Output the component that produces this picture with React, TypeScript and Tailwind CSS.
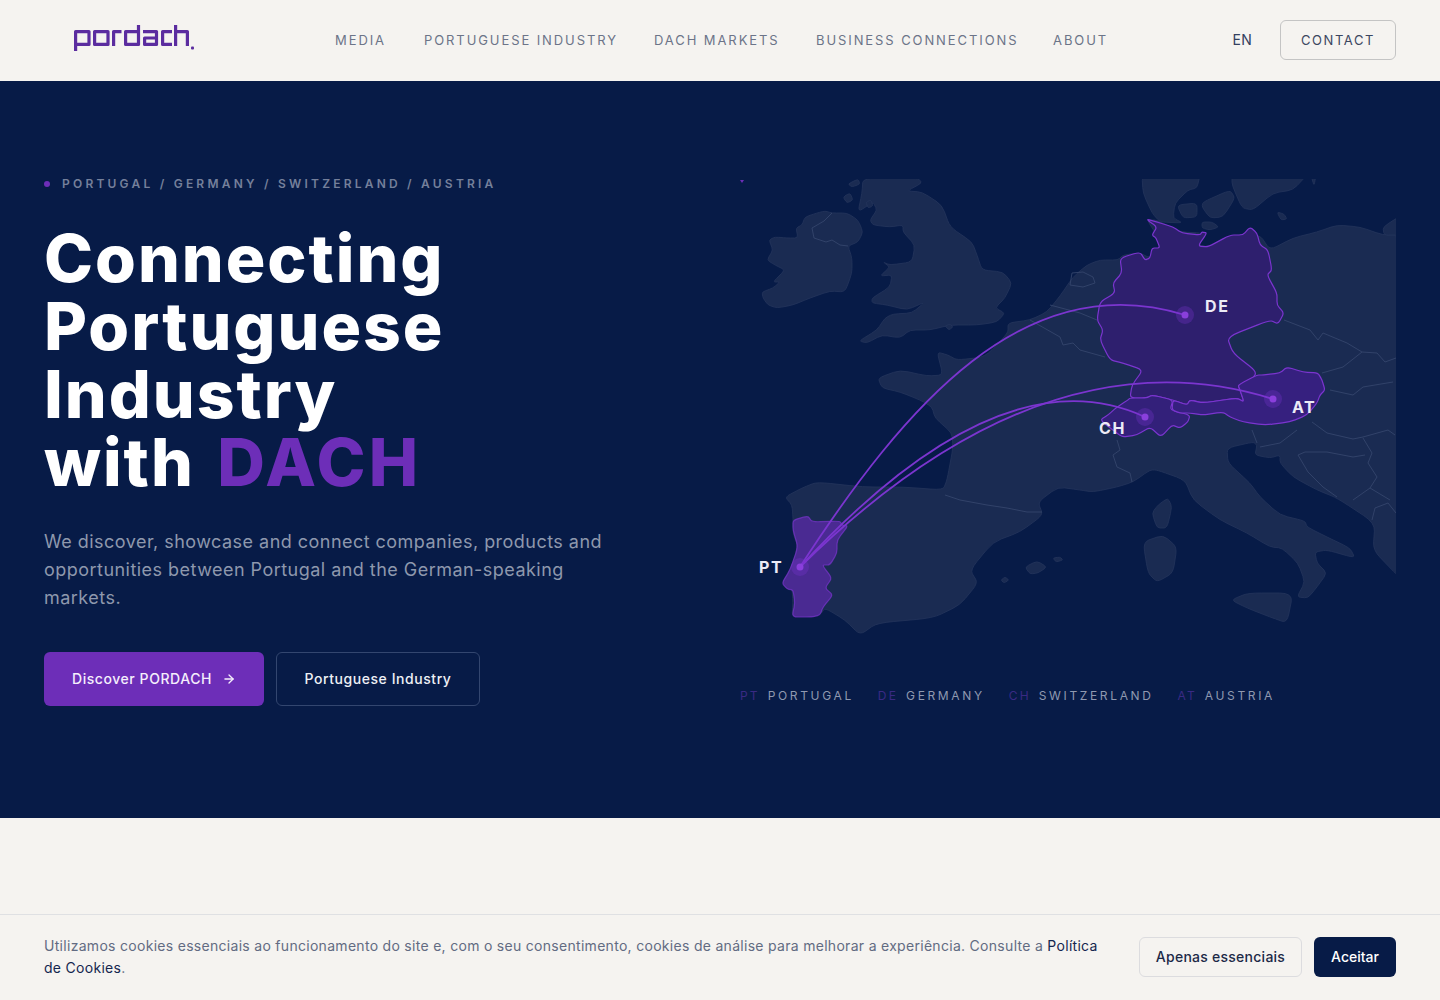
import { ArrowRight } from 'lucide-react';

const NAV_LINKS = [
  { label: 'MEDIA', cls: 'w-[53px]' },
  { label: 'PORTUGUESE INDUSTRY', cls: 'w-[194px]' },
  { label: 'DACH MARKETS', cls: 'w-[126px]' },
  { label: 'BUSINESS CONNECTIONS', cls: 'w-[201px]' },
  { label: 'ABOUT', cls: 'w-[55px]' },
];

const LEGEND = [
  { code: 'PT', name: 'PORTUGAL' },
  { code: 'DE', name: 'GERMANY' },
  { code: 'CH', name: 'SWITZERLAND' },
  { code: 'AT', name: 'AUSTRIA' },
];

// map shapes, traced in page coordinates (the viewBox below starts at the map's corner)
const LAND = [
  // Ireland
  '769,240 775,237 787,238 798,238 796,228 802,225 805,217 817,213 825,211 832,213 847,213 858,220 863,232 858,242 848,246 852,258 852,273 845,292 830,291 810,298 793,305 777,308 768,305 763,298 762,292 773,288 780,282 773,282 785,270 775,265 767,260 773,250',
  // Great Britain
  '863,178 918,178 922,183 907,191 922,192 942,205 950,227 972,242 977,255 982,270 1003,272 1012,283 1005,298 995,308 1005,313 997,322 977,325 950,325 930,330 910,330 900,338 882,335 867,343 859,341 877,330 885,318 893,314 912,313 925,302 907,310 887,305 872,303 872,298 890,287 892,275 880,276 890,267 883,262 890,265 912,262 915,245 903,232 903,225 890,227 873,225 870,220 877,210 873,202 858,212 862,193',
  '848,184 858,179 860,184 852,187',
  '843,197 850,193 853,200 847,203',
  '866,202 871,200 873,206 868,208',
  '945,326 950,324 953,327 949,330',
  // Mainland
  '1400,235 1383,235 1360,227 1337,225 1317,232 1293,238 1270,250 1260,235 1233,235 1210,247 1198,245 1203,233 1180,232 1157,220 1147,220 1158,237 1160,248 1150,258 1140,253 1123,255 1118,260 1100,260 1087,265 1073,277 1060,296 1047,312 1030,320 1008,323 1008,333 985,357 957,360 948,355 937,352 943,375 927,376 900,370 878,378 882,388 900,392 920,400 932,407 935,418 952,433 953,448 947,480 943,490 903,487 863,487 817,482 802,488 785,497 792,505 793,518 793,533 798,547 790,570 782,583 792,588 793,603 792,617 820,615 825,608 845,620 860,635 877,623 933,618 960,605 978,583 970,570 993,542 1020,532 1043,515 1038,502 1058,487 1080,490 1093,492 1117,487 1133,482 1150,470 1157,470 1185,480 1193,500 1220,520 1247,533 1270,547 1282,548 1298,563 1305,582 1297,597 1308,598 1317,587 1327,573 1317,563 1315,552 1327,550 1355,558 1350,548 1327,537 1307,527 1305,521 1280,515 1260,497 1250,483 1228,463 1227,448 1253,442 1257,445 1255,455 1270,458 1280,455 1280,463 1293,477 1317,490 1337,498 1375,523 1373,550 1395,573 1400,577',
  // Denmark
  '1142,175 1200,175 1197,188 1188,190 1175,203 1173,218 1183,223 1160,222 1152,213 1143,193',
  '1203,202 1230,190 1235,198 1223,217 1210,218 1202,207',
  '1177,205 1197,203 1197,217 1183,218',
  '1202,222 1212,222 1219,227 1210,230 1202,228',
  '1277,212 1284,214 1287,219 1281,220',
  // Sweden and the Baltic edge
  '1232,175 1307,175 1293,190 1273,193 1253,210 1242,208 1232,185',
  '1311,175 1316,175 1314,186',
  '1383,227 1400,216 1400,235 1384,235',
  // Corsica, Sardinia, Sicily
  '1168,498 1172,507 1167,528 1157,528 1152,513 1158,505',
  '1143,542 1163,535 1177,547 1173,573 1157,582 1148,573',
  '1231,600 1248,593 1293,593 1287,623 1270,617 1247,608',
  // Balearics
  '1025,567 1037,561 1047,567 1038,573 1030,574',
  '1053,558 1060,557 1063,560 1056,562',
  '1001,580 1005,577 1009,580 1004,583',
];

const BORDERS = [
  'M832,213 L824,221 L812,228 L814,238 L826,242 L832,240 L840,245 L848,246',
  'M945,495 L960,500 L987,505 L1007,508 L1027,512 L1042,512',
  'M1030,320 L1060,337 L1063,345 L1073,343 L1080,350 L1105,357',
  'M1050,305 L1080,313 L1097,320',
  'M1117,440 L1120,450 L1113,455 L1117,467 L1130,473 L1132,482',
  'M1252,430 L1257,443 M1297,430 L1280,443 L1260,447',
  'M1312,422 L1327,433 L1353,439 L1363,437 L1388,430 L1395,435',
  'M1298,455 L1305,452 L1327,452 L1353,457 L1365,455 M1298,455 L1308,472 L1323,487 L1337,497',
  'M1363,438 L1372,453 L1368,463 L1377,477 L1370,488 L1353,500 M1370,488 L1390,500',
  'M1372,520 L1375,508 L1388,503 L1396,513',
  'M1284,320 L1310,330 L1318,340 L1323,333 L1347,343 L1362,352 L1377,353 L1385,362 L1396,358',
  'M1322,373 L1343,367 L1362,352',
  'M1330,390 L1353,395 L1363,387 L1393,382',
  'M1083,272 L1093,277 L1095,283 L1083,287 L1070,285 L1072,273 Z',
];

const GERMANY =
  '1146,219 1157,222 1173,227 1182,233 1200,235 1202,232 1207,233 1198,246 1208,247 1230,235 1243,235 1250,227 1257,233 1260,245 1268,250 1272,270 1267,275 1277,293 1277,305 1284,313 1278,324 1270,320 1227,337 1233,353 1257,372 1250,382 1238,385 1240,390 1244,402 1237,398 1203,403 1190,400 1187,405 1173,400 1152,395 1147,398 1130,398 1132,385 1143,370 1123,363 1110,360 1100,340 1103,330 1097,320 1100,302 1115,293 1113,283 1122,273 1120,258 1140,252 1145,260 1150,258 1152,248 1160,248 1156,238 1152,235 1157,227';
const SWITZERLAND =
  '1130,398 1147,398 1152,395 1173,400 1170,410 1190,415 1188,422 1180,428 1172,425 1161,437 1150,427 1137,435 1123,437 1118,434 1100,420 1108,415 1117,407 1128,400';
const AUSTRIA =
  '1240,390 1238,385 1257,375 1263,375 1280,373 1287,367 1303,372 1318,373 1322,380 1325,390 1320,395 1317,403 1307,415 1290,422 1265,425 1243,422 1230,417 1223,412 1203,415 1190,413 1180,413 1172,410 1173,400 1187,405 1190,400 1203,403 1237,398 1244,402';
const PORTUGAL =
  '793,520 808,516 812,522 840,521 842,525 848,526 837,540 837,553 830,565 822,565 832,578 825,588 833,595 823,607 820,615 812,617 792,617 795,603 793,590 787,589 782,583 790,570 798,547 793,530';

const ROUTES = ['M800,567 C905,405 1025,265 1185,315', 'M800,567 Q1044,327 1273,399', 'M800,567 Q1000,350 1145,417'];
const PINS = [
  [1185, 315],
  [1273, 399],
  [1145, 417],
  [800, 567],
];
const PIN_LABELS = [
  { text: 'DE', x: 1205, y: 312 },
  { text: 'AT', x: 1292, y: 413 },
  { text: 'CH', x: 1099, y: 434 },
  { text: 'PT', x: 759, y: 573 },
];

// round off the corners of a traced outline so coasts don't look like polygons
function soften(points: string) {
  const pts = points.split(' ').map((p) => p.split(',').map(Number));
  const n = pts.length;
  const r = 0.3;
  let d = '';
  pts.forEach((p, i) => {
    const prev = pts[(i - 1 + n) % n];
    const next = pts[(i + 1) % n];
    const ax = p[0] + (prev[0] - p[0]) * r;
    const ay = p[1] + (prev[1] - p[1]) * r;
    const bx = p[0] + (next[0] - p[0]) * r;
    const by = p[1] + (next[1] - p[1]) * r;
    d += `${i === 0 ? 'M' : 'L'}${ax.toFixed(1)},${ay.toFixed(1)} Q${p[0]},${p[1]} ${bx.toFixed(1)},${by.toFixed(1)} `;
  });
  return d + 'Z';
}

function Logo() {
  return (
    <svg role="img" aria-label="pordach" width="125" height="30" viewBox="74 24 125 30" className="block">
      <g fill="none" stroke="#5b2c9f" strokeWidth="3.2" strokeLinejoin="round">
        <path d="M75.6,51 V31.6 H89 V44.4 H75.6" />
        <path d="M94.6,31.6 H108 V44.4 H94.6 Z" />
        <path d="M113.6,46 V31.6 H121.5" />
        <path d="M138.5,25 V44.4 H125.6 V31.6 H138.5" />
        <path d="M143,31.6 H156.5 V44.4 H144.6 V38 H156.5" />
        <path d="M172,31.6 H162.6 V44.4 H172" />
        <path d="M175.6,25 V46 M175.6,31.6 H187.4 V46" />
      </g>
      <rect x="191" y="46.5" width="3" height="3" rx="1" fill="#5b2c9f" />
    </svg>
  );
}

function EuropeMap() {
  return (
    <svg viewBox="740 179 656 470" width="656" height="470" className="block">
      <g fill="#1a2b52" stroke="#24355c" strokeWidth="0.8" strokeLinejoin="round">
        {LAND.map((pts, i) => (
          <path key={i} d={soften(pts)} />
        ))}
      </g>
      <g fill="none" stroke="#34456c" strokeWidth="0.9" strokeLinejoin="round">
        {BORDERS.map((d, i) => (
          <path key={i} d={d} />
        ))}
      </g>
      <polygon points="740,180 744,180 742,183" fill="#6d2eb8" />
      <g stroke="#7b35cf" strokeWidth="1.2" strokeLinejoin="round">
        <path d={soften(GERMANY)} fill="#2e1f6e" />
        <path d={soften(SWITZERLAND)} fill="#33207a" />
        <path d={soften(AUSTRIA)} fill="#36207f" />
        <path d={soften(PORTUGAL)} fill="#4a2a92" strokeOpacity="0.7" />
      </g>
      <g fill="none" stroke="#7b35cf" strokeWidth="1.8">
        {ROUTES.map((d) => (
          <path key={d} d={d} />
        ))}
      </g>
      {PINS.map(([x, y]) => (
        <g key={x}>
          <circle cx={x} cy={y} r="9" fill="#7b35cf" fillOpacity="0.3" />
          <circle cx={x} cy={y} r="3.5" fill="#8a3fdc" />
        </g>
      ))}
      {PIN_LABELS.map((l) => (
        <text
          key={l.text}
          x={l.x}
          y={l.y}
          fill="#ecebf6"
          fontSize="16"
          fontWeight="700"
          letterSpacing="1.6"
          fontFamily="Inter, sans-serif"
        >
          {l.text}
        </text>
      ))}
    </svg>
  );
}

export default function App() {
  return (
    <div className="min-h-[1000px] bg-[#f5f3f0] font-['Inter',sans-serif]">
      <header className="h-[81px] pb-px flex items-center pl-[74px] pr-11 bg-[#f5f3f0]">
        <div className="w-[261px] -mt-[2px]">
          <Logo />
        </div>
        <nav className="flex gap-9 pt-0.5 text-[13px] tracking-[0.147em] text-[#6c7488]">
          {NAV_LINKS.map((link) => (
            <a key={link.label} href="#" className={`${link.cls} whitespace-nowrap`}>
              {link.label}
            </a>
          ))}
        </nav>
        <div className="ml-auto flex items-center gap-7">
          <span className="text-sm font-normal tracking-[0.02em] text-[#33405e]">EN</span>
          <button className="w-[116px] h-10 rounded-md border border-[#c4c4c4] pt-0.5 text-[13px] font-normal tracking-[0.12em] text-[#3b4660]">
            CONTACT
          </button>
        </div>
      </header>

      <section className="h-[737px] bg-[#071b47] pl-11 pr-11 pt-[98px] flex">
        <div className="w-[696px] shrink-0">
          <div className="flex items-center gap-3 h-[10px] mt-0">
            <span className="w-1.5 h-1.5 rounded-full bg-[#6d2eb8]" />
            <span className="text-xs font-semibold tracking-[0.268em] text-[#75809b]">
              PORTUGAL / GERMANY / SWITZERLAND / AUSTRIA
            </span>
          </div>
          <h1 className="mt-[35px] text-[66px] leading-[68px] font-extrabold text-white tracking-[0.03em]">
            Connecting
            <br />
            Portuguese
            <br />
            Industry
            <br />
            with <span className="ml-[6px] tracking-[0.05em] text-[#6d2eb8]">DACH</span>
          </h1>
          <p className="mt-8 text-lg leading-7 text-[#8e98ad] tracking-[0.026em]">
            We discover, showcase and connect companies, products and
            <br />
            opportunities between Portugal and the German-speaking
            <br />
            markets.
          </p>
          <div className="mt-10 flex gap-3">
            <button className="w-[220px] h-[54px] rounded-md bg-[#6d2eb8] text-sm font-medium tracking-[0.04em] text-[#f5effc] flex items-center justify-center gap-[10px]">
              Discover PORDACH
              <ArrowRight size={14} strokeWidth={2.25} />
            </button>
            <button className="w-[204px] h-[54px] rounded-md border border-[#33466f] text-sm font-medium tracking-[0.04em] text-[#eef0f5]">
              Portuguese Industry
            </button>
          </div>
        </div>
        <div className="w-[656px] shrink-0">
          <EuropeMap />
          <div className="mt-[39px] flex gap-6 text-xs">
            {LEGEND.map((item) => (
              <span key={item.code} className="flex gap-2 whitespace-nowrap">
                <span className="tracking-[0.18em] text-[#3a2a84]">{item.code}</span>
                <span className="tracking-[0.22em] text-[#8f99b0]">{item.name}</span>
              </span>
            ))}
          </div>
        </div>
      </section>

      <div className="fixed inset-x-0 bottom-0 h-[86px] pb-0.5 border-t border-[#dfe0e3] bg-[#f5f3f0] px-11 flex items-center justify-between">
        <p className="w-[1075px] text-sm leading-[22px] tracking-[0.021em] text-[#626b82]">
          Utilizamos cookies essenciais ao funcionamento do site e, com o seu consentimento, cookies de análise para
          melhorar a experiência. Consulte a <a href="#" className="text-[#14264f]">Política</a>
          <br />
          <a href="#" className="text-[#14264f]">de Cookies</a>.
        </p>
        <div className="flex gap-3">
          <button className="w-[163px] h-10 rounded-md border border-[#dcdcdf] text-sm font-medium tracking-[0.018em] text-[#1c2947]">
            Apenas essenciais
          </button>
          <button className="w-[82px] h-10 rounded-md bg-[#071b47] text-sm font-medium text-white">Aceitar</button>
        </div>
      </div>
    </div>
  );
}
